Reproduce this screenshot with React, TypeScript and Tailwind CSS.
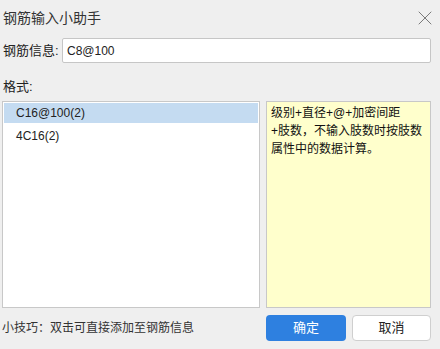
import { X } from 'lucide-react';

const font = { fontFamily: '"Liberation Sans", "Noto Sans CJK SC", sans-serif' };

const formats = ['C16@100(2)', '4C16(2)'];

export default function App() {
  return (
    <div className="w-[440px] h-[349px] bg-[#efefef] pl-[2px] pr-[9px] text-[#222] flex flex-col overflow-hidden" style={font}>
      {/* Title bar */}
      <div className="h-[36px] flex items-center justify-between">
        <span className="pl-[1px] text-[14px] text-[#333]">钢筋输入小助手</span>
        <X size={24} strokeWidth={1} className="text-[#7a7a7a] -mr-[6px]" />
      </div>

      {/* Input row */}
      <div className="mt-[2px] h-[25px] flex items-center">
        <span className="w-[60px] pl-[1px] text-[13px]">钢筋信息:</span>
        <div className="flex-1 h-full bg-white border border-[#c6c6c6] rounded-[2px] flex items-center pl-[4px] text-[12px]">
          C8@100
        </div>
      </div>

      <div className="mt-[15px] h-[18px] leading-[18px] pl-[1px] text-[13px]">格式:</div>

      {/* Boxes */}
      <div className="mt-[5px] h-[207px] flex gap-[6px]">
        <div className="w-[258px] bg-white border border-[#c8c8c8] p-[1px] flex flex-col gap-[3px]">
          {formats.map((f, i) => (
            <div
              key={f}
              className={`h-[20px] flex items-center pl-[12px] text-[12px] ${i === 0 ? 'bg-[#c4dbf1]' : ''}`}
            >
              {f}
            </div>
          ))}
        </div>
        <div className="flex-1 bg-[#ffffcc] border border-[#c8c8c8] pt-[2px] pl-[4px] text-[12px] leading-[18px] text-[#111]">
          <div>级别+直径+@+加密间距</div>
          <div>+肢数，不输入肢数时按肢数</div>
          <div>属性中的数据计算。</div>
        </div>
      </div>

      {/* Footer */}
      <div className="mt-[7px] h-[26px] flex items-center">
        <span className="flex-1 text-[12px] text-[#333]">小技巧：双击可直接添加至钢筋信息</span>
        <button className="w-[80px] h-[26px] rounded-[4px] bg-[#2e80e0] text-white text-[13px]">确定</button>
        <button className="ml-[6px] w-[79px] h-[26px] rounded-[4px] bg-white border border-[#cfcfcf] text-[13px] text-[#222]">取消</button>
      </div>
    </div>
  );
}
